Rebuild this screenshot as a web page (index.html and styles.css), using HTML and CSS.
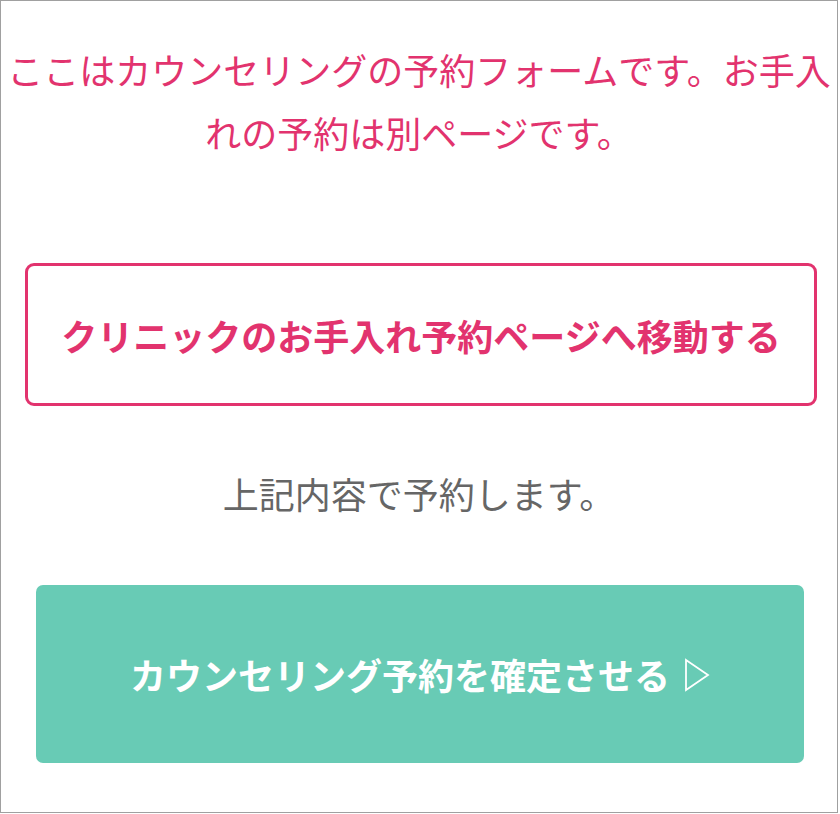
FILE: index.html
```html
<!DOCTYPE html>
<html lang="ja">
<head>
    <meta charset="UTF-8">
    <meta name="viewport" content="width=device-width, initial-scale=1.0">
    <title>カウンセリング予約</title>
    <link rel="stylesheet" href="styles.css">
</head>
<body>
    <div class="frame">
        <!-- 注意書き -->
        <p class="notice">ここはカウンセリングの予約フォームです。お手入れの予約は別ページです。</p>

        <!-- お手入れ予約ページへのリンク -->
        <a class="link-box" href="#">クリニックのお手入れ予約ページへ移動する</a>

        <p class="confirm-text">上記内容で予約します。</p>

        <!-- 確定ボタン -->
        <button class="submit">
            <span>カウンセリング予約を確定させる</span>
            <svg class="arrow" width="26" height="34" viewBox="0 0 26 34">
                <path d="M2 2 L24 17 L2 32 Z" fill="none" stroke="#fff" stroke-width="1.8" stroke-linejoin="miter"/>
            </svg>
        </button>
    </div>
</body>
</html>
```

FILE: styles.css
```css
body {
    margin: 0;
    background: #fff;
    font-family: "Noto Sans CJK JP", "Noto Sans", sans-serif;
}

.frame {
    box-sizing: border-box;
    width: 838px;
    height: 813px;
    border: 1px solid #a0a0a0;
    padding-top: 37px;
}

.notice {
    margin: 0 4px;
    color: #e2336e;
    font-size: 36px;
    line-height: 63px;
    text-align: center;
}

.link-box {
    display: flex;
    align-items: center;
    justify-content: center;
    box-sizing: border-box;
    width: 792px;
    height: 143px;
    margin: 99px 0 0 24px;
    border: 3px solid #e2336e;
    border-radius: 9px;
    color: #e2336e;
    font-size: 36px;
    font-weight: bold;
    text-decoration: none;
}

.confirm-text {
    margin: 56px 0 0;
    color: #666;
    font-size: 36px;
    line-height: 63px;
    text-align: center;
}

.submit {
    display: flex;
    align-items: center;
    justify-content: center;
    gap: 14px;
    width: 768px;
    height: 178px;
    margin: 60px 0 0 35px;
    padding: 0;
    border: none;
    border-radius: 7px;
    background-color: #68cbb5;
    color: #fff;
    font-family: inherit;
    font-size: 36px;
    font-weight: bold;
    cursor: pointer;
}

.arrow {
    display: block;
    margin-top: 2px;
}
```
